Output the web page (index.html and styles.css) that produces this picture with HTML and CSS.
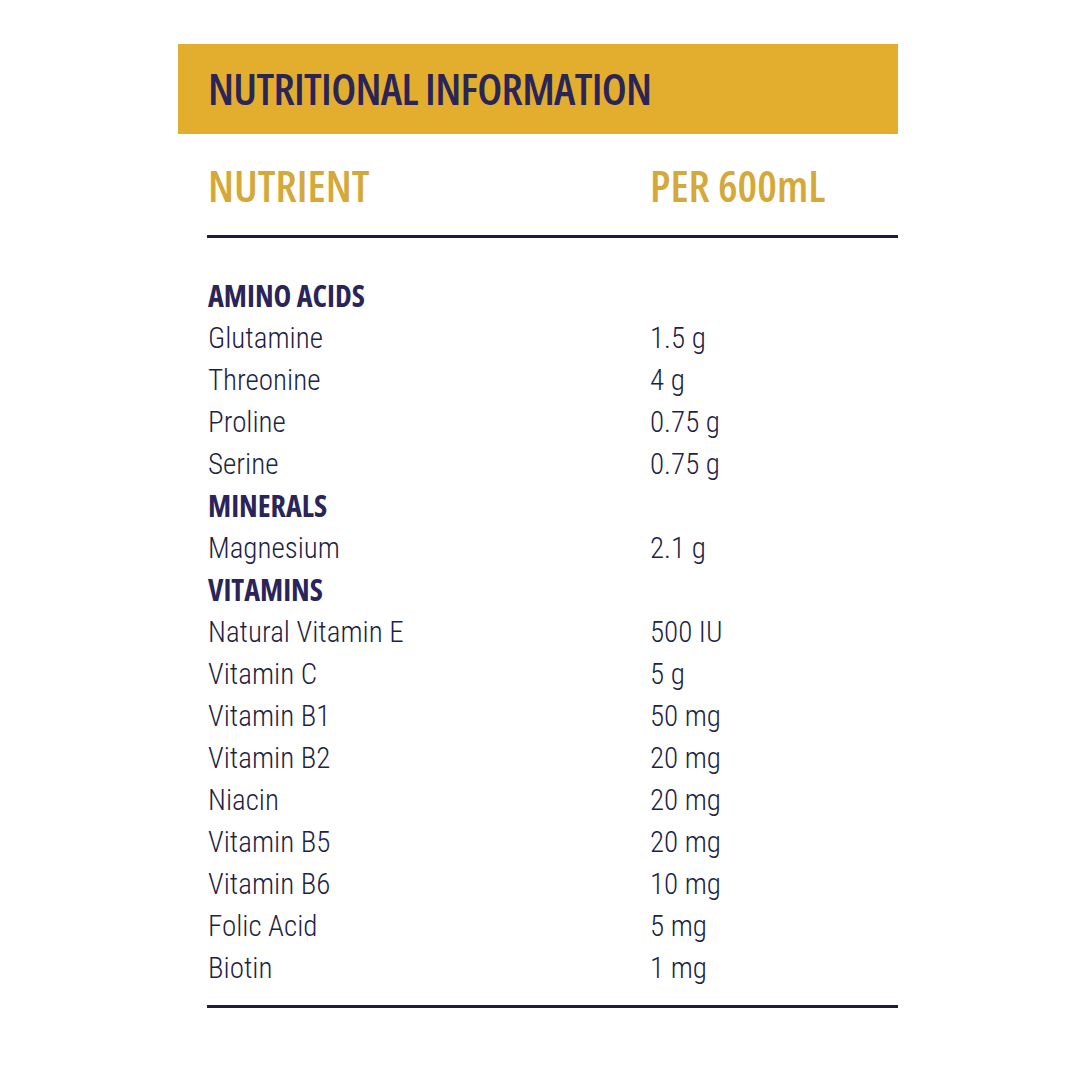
FILE: index.html
```html
<!DOCTYPE html>
<html>
<head>
<meta charset="utf-8">
<link rel="stylesheet" href="styles.css">
</head>
<body>
<div class="panel">
  <div class="banner"><h1 class="title">NUTRITIONAL INFORMATION</h1></div>
  <div class="table">
    <div class="head">
      <span class="col-a">NUTRIENT</span>
      <span class="col-b">PER 600mL</span>
    </div>
    <div class="rows">
      <div class="group">AMINO ACIDS</div><div></div>
      <div>Glutamine</div><div>1.5 g</div>
      <div>Threonine</div><div>4 g</div>
      <div>Proline</div><div>0.75 g</div>
      <div>Serine</div><div>0.75 g</div>
      <div class="group">MINERALS</div><div></div>
      <div>Magnesium</div><div>2.1 g</div>
      <div class="group">VITAMINS</div><div></div>
      <div>Natural Vitamin E</div><div>500 IU</div>
      <div>Vitamin C</div><div>5 g</div>
      <div>Vitamin B1</div><div>50 mg</div>
      <div>Vitamin B2</div><div>20 mg</div>
      <div>Niacin</div><div>20 mg</div>
      <div>Vitamin B5</div><div>20 mg</div>
      <div>Vitamin B6</div><div>10 mg</div>
      <div>Folic Acid</div><div>5 mg</div>
      <div>Biotin</div><div>1 mg</div>
    </div>
  </div>
</div>
</body>
</html>
```

FILE: styles.css
```css
html, body {
  margin: 0;
  padding: 0;
  background: #ffffff;
}
body {
  font-family: "Roboto Condensed", "Open Sans", sans-serif;
  color: #27234f;
}
.panel {
  width: 720px;
  margin-left: 178px;
  padding-top: 44px;
}
.banner {
  background: #e3ae2e;
  height: 90px;
  display: flex;
  align-items: center;
  padding-left: 30px;
}
.title {
  margin: 0;
  margin-top: -3px;
  font-family: "Open Sans", sans-serif;
  font-stretch: 75%;
  font-size: 44px;
  font-weight: 600;
  color: #2a2559;
  letter-spacing: -0.7px;
}
.table {
  margin-left: 29px;
}
.head {
  display: grid;
  grid-template-columns: 442px 1fr;
  height: 101px;
  padding-left: 1px;
  border-bottom: 3px solid #1e1c3a;
  font-family: "Open Sans", sans-serif;
  font-stretch: 75%;
  font-size: 44px;
  font-weight: 600;
  color: #d4a93a;
  letter-spacing: 0;
  line-height: 102px;
}
.rows {
  display: grid;
  grid-template-columns: 442px 1fr;
  grid-auto-rows: 42px;
  padding: 37px 0 16px 1px;
  border-bottom: 3px solid #1e1c3a;
  font-size: 29px;
  font-weight: 300;
  line-height: 42px;
  color: #221f45;
}
.group {
  font-family: "Open Sans", sans-serif;
  font-stretch: 75%;
  font-weight: 700;
  font-size: 30px;
  color: #2a2559;
  letter-spacing: 0;
}
```
